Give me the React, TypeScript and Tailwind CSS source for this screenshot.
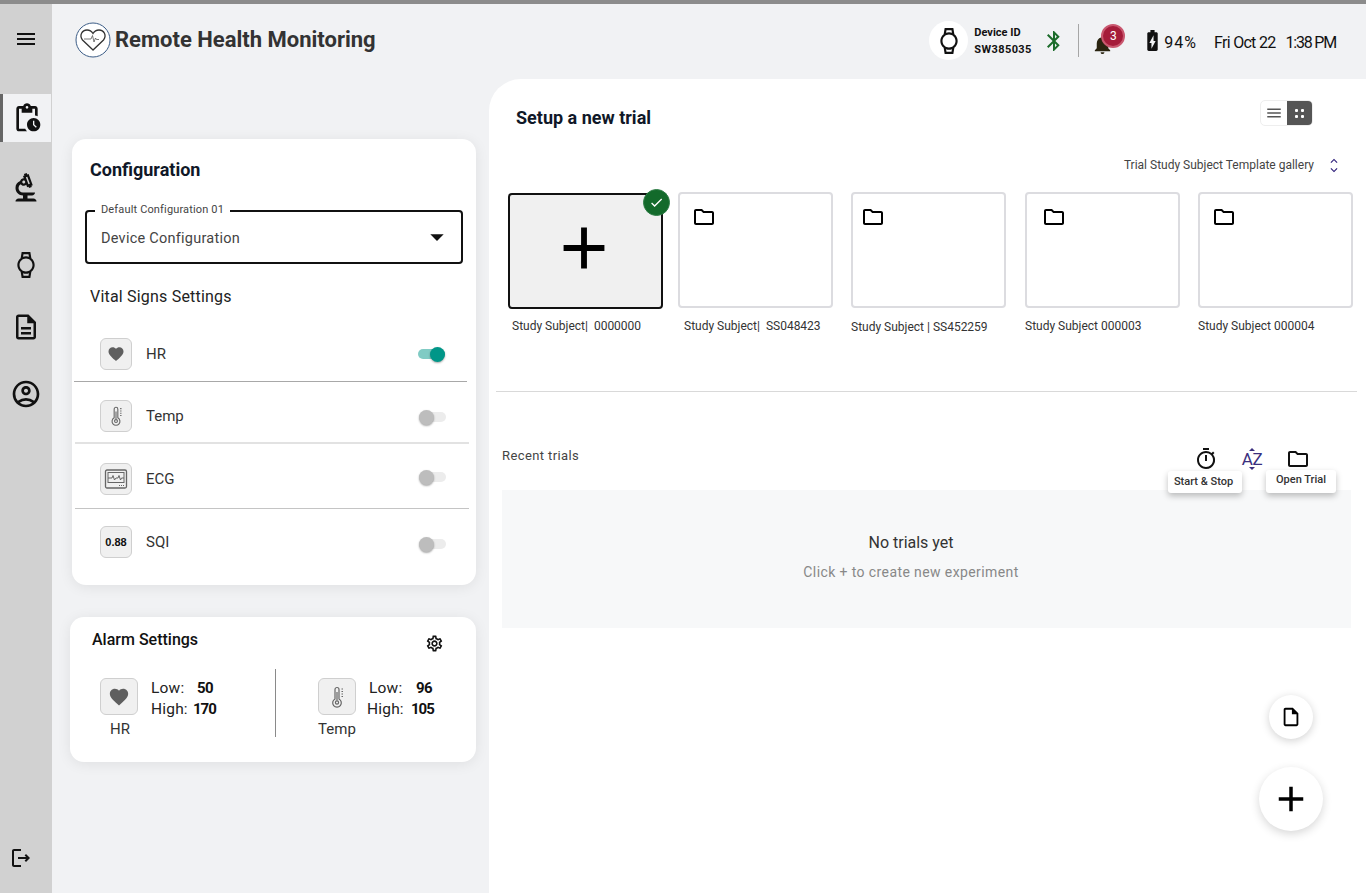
import React from 'react';
import {
  MdMenu, MdOutlinePendingActions, MdOutlineBiotech, MdOutlineWatch, MdOutlineDescription,
  MdOutlineAccountCircle, MdOutlineLogout, MdBluetooth, MdNotifications, MdBatteryChargingFull,
  MdFavorite, MdOutlineSettings, MdCheck, MdAdd, MdOutlineFolder, MdOutlineInsertDriveFile,
  MdOutlineTimer, MdArrowDropDown, MdKeyboardArrowUp, MdKeyboardArrowDown,
} from 'react-icons/md';

const Logo = () => (
  <svg width="36" height="36" viewBox="0 0 36 36" fill="none">
    <circle cx="18" cy="18" r="17" fill="#fff" stroke="#3b5c86" strokeWidth="1" />
    <path d="M18 28 L7.5 18 C4 13.5 7 8 12 8 C14.8 8 16.8 9.5 18 11.5 C19.2 9.5 21.2 8 24 8 C29 8 32 13.5 28.5 18 Z" stroke="#333" strokeWidth="1.3" />
    <path d="M9 17 H16 L17.5 13.5 L19 20 L20.5 16 L21.5 17.5 H24" stroke="#555" strokeWidth="0.8" />
  </svg>
);

const Thermo = ({ size = 22 }: { size?: number }) => (
  <svg width={size} height={size} viewBox="0 0 24 24" fill="none" stroke="#666" strokeWidth="1.2">
    <path d="M10 14V4.5a2 2 0 0 1 4 0V14a4.3 4.3 0 1 1-4 0Z" />
    <circle cx="12" cy="17.5" r="1.6" />
    <path d="M12 15.5V7M16.5 4h1.5M16.5 6.5h1.5M16.5 9h1.5M16.5 11.5h1.5" />
  </svg>
);

const EcgIcon = () => (
  <svg width="24" height="24" viewBox="0 0 24 24" fill="none" stroke="#666" strokeWidth="1">
    <rect x="1.5" y="3" width="21" height="18" rx="1.5" strokeWidth="1.3" />
    <rect x="4" y="5.5" width="16" height="10" />
    <path d="M4 11H8L9 8.5L10.5 13L12 11H14L15 8.5L16.5 13L17.5 11H20" />
    <path d="M15 18.5h5" strokeDasharray="1 1" />
  </svg>
);

const IconBox = ({ children, className }: { children: React.ReactNode; className: string }) => (
  <div className={`flex items-center justify-center shrink-0 rounded-md border border-[#cfcfcf] bg-[#f0f0f0] ${className}`}>
    {children}
  </div>
);

const Toggle = ({ on }: { on?: boolean }) => (
  <div className={`relative w-[27px] h-[10px] rounded-full ${on ? 'bg-[#80cbc4]' : 'bg-[#ececec]'}`}>
    <div
      className={`absolute top-[-2.5px] w-[15px] h-[15px] rounded-full shadow-[0_1px_2px_rgba(0,0,0,0.35)] ${on ? 'right-0 bg-[#009688]' : 'left-0 bg-[#bdbdbd]'}`}
    />
  </div>
);

const vitals = [
  { label: 'HR', icon: <MdFavorite size={18} color="#5f5f5f" />, row: 'h-[58px] pt-[3px] border-b border-[#a8a8a8] ml-[2px] mr-[9px]', box: 'ml-[26px]', toggle: 'pr-[22px]' },
  { label: 'Temp', icon: <Thermo />, row: 'h-[62px] pt-[8px] border-b-2 border-[#e2e2e2] ml-[3px] mr-[7px]', box: 'ml-[25px]', toggle: 'pr-[23px] mt-[2px]' },
  { label: 'ECG', icon: <EcgIcon />, row: 'h-[65px] pt-[6px] border-b border-[#c4c4c4] ml-[3px] mr-[7px]', box: 'ml-[25px]', toggle: 'pr-[23px] mb-[4px]' },
  { label: 'SQI', icon: <span className="text-[11px] font-bold text-[#111] font-['Liberation_Sans',sans-serif]">0.88</span>, row: 'h-[66px] ml-[3px] mr-[7px]', box: 'ml-[25px]', toggle: 'pr-[23px] mt-[4px]' },
];

const subjects = [
  { name: 'Study Subject|  SS048423', ml: 'ml-[15px]', text: 'pl-[6px] pt-[11px]', folder: 'pl-[12px]' },
  { name: 'Study Subject | SS452259', ml: 'ml-[18px]', text: 'pt-[12px]', folder: 'pl-[8px]' },
  { name: 'Study Subject 000003', ml: 'ml-[19px]', text: 'pt-[11px]', folder: 'pl-[15px]' },
  { name: 'Study Subject 000004', ml: 'ml-[18px]', text: 'pt-[11px]', folder: 'pl-[12px]' },
];

const SideItem = ({ children, className }: { children: React.ReactNode; className: string }) => (
  <div className={`flex items-center justify-center ${className}`}>{children}</div>
);

export default function App() {
  return (
    <div className="w-[1366px] h-[893px] overflow-hidden flex flex-col bg-[#f1f2f4] text-[#111] font-[Roboto,sans-serif]">
      <div className="h-[4px] bg-[#8c8c8c] shrink-0" />
      <div className="flex flex-1 min-h-0">
        <aside className="w-[52px] shrink-0 bg-[#d1d1d1] flex flex-col">
          <SideItem className="h-[70px]"><MdMenu size={24} /></SideItem>
          <div className="h-[20px]" />
          <SideItem className="h-[48px] bg-[#f1f2f4] border-l-[3px] border-[#666] mr-[1px]"><MdOutlinePendingActions size={32} /></SideItem>
          <SideItem className="h-[32px] mt-[30px]"><MdOutlineBiotech size={36} /></SideItem>
          <SideItem className="h-[32px] mt-[45px]"><MdOutlineWatch size={26} /></SideItem>
          <SideItem className="h-[32px] mt-[30px]"><MdOutlineDescription size={30} /></SideItem>
          <SideItem className="h-[32px] mt-[35px]"><MdOutlineAccountCircle size={32} /></SideItem>
          <div className="mt-auto mb-[23px] pl-[9px]"><MdOutlineLogout size={24} /></div>
        </aside>

        <div className="flex-1 flex flex-col min-w-0">
          <header className="h-[75px] shrink-0 flex items-start pl-[23px]">
            <div className="flex items-center mt-[18px]">
              <Logo />
              <span className="ml-[4px] text-[22px] leading-[30px] font-bold text-[#333]">Remote Health Monitoring</span>
            </div>
            <div className="ml-auto flex items-center mt-[17px] pr-[30px]">
              <div className="w-[39px] h-[39px] rounded-full bg-white flex items-center justify-center"><MdOutlineWatch size={26} /></div>
              <div className="ml-[6px] w-[57px] text-[11px] leading-[17px] font-bold">
                <div>Device ID</div>
                <div className="tracking-[0.4px]">SW385035</div>
              </div>
              <MdBluetooth size={24} color="#1b6b2a" className="ml-[11px]" />
              <div className="w-px h-[33px] bg-[#a6a6a6] ml-[12px]" />
              <div className="relative ml-[12px] w-[24px] h-[24px]">
                <MdNotifications size={23} color="#2a2410" className="mt-[4px]" />
                <div className="absolute left-[10px] top-[-5px] w-[24px] h-[24px] rounded-full bg-[#a51c3a] border-2 border-[#c9586f] text-white text-[12px] flex items-center justify-center">3</div>
              </div>
              <MdBatteryChargingFull size={25} className="ml-[25px]" />
              <span className="ml-[-1px] mt-[4px] text-[16px] tracking-[1px]">94%</span>
              <span className="ml-[17px] mt-[4px] text-[16px] tracking-[-0.7px]">Fri Oct 22</span>
              <span className="ml-[10px] mt-[4px] text-[16px] tracking-[-1.2px]">1:38 PM</span>
            </div>
          </header>

          <div className="flex flex-1 min-h-0">
            <div className="w-[437px] shrink-0 pl-[18px] pt-[60px] flex flex-col">
              <section className="ml-[2px] w-[404px] h-[446px] bg-white rounded-[14px] shadow-[0_2px_14px_rgba(0,0,0,0.08)] pt-[19px]">
                <h2 className="ml-[18px] text-[18px] leading-[24px] font-bold text-[#101828]">Configuration</h2>
                <div className="relative ml-[13px] mt-[28px] w-[378px] h-[54px] rounded-[4px] border-2 border-[#111] flex items-center justify-between pl-[14px] pr-[8px] pt-[3px]">
                  <span className="absolute left-[8px] top-[-8px] bg-white px-[6px] text-[11px] leading-[12px] tracking-[0.15px] text-[#444]">Default Configuration 01</span>
                  <span className="text-[14.5px] tracking-[0.25px] text-[#444]">Device Configuration</span>
                  <MdArrowDropDown size={32} color="#111" className="mt-[-3px]" />
                </div>
                <div className="ml-[18px] mt-[23px] text-[16px] leading-[20px] tracking-[0.2px] text-[#222]">Vital Signs Settings</div>
                <div className="mt-[17px]">
                  {vitals.map((v) => (
                    <div key={v.label} className={`flex items-center ${v.row}`}>
                      <IconBox className={`w-[32px] h-[32px] ${v.box}`}>{v.icon}</IconBox>
                      <span className="ml-[14px] text-[15px] text-[#333]">{v.label}</span>
                      <div className={`ml-auto ${v.toggle}`}><Toggle on={v.label === 'HR'} /></div>
                    </div>
                  ))}
                </div>
              </section>

              <section className="mt-[32px] w-[406px] h-[145px] bg-white rounded-[14px] shadow-[0_2px_14px_rgba(0,0,0,0.08)] pt-[13px]">
                <div className="flex items-start justify-between pl-[22px] pr-[32px]">
                  <h3 className="text-[16px] leading-[20px] font-medium">Alarm Settings</h3>
                  <MdOutlineSettings size={19} className="mt-[4px]" />
                </div>
                <div className="flex mt-[16px] h-[68px]">
                  <div className="w-[205px] flex pl-[30px] pt-[9px]">
                    <div className="flex flex-col items-center w-[40px]">
                      <IconBox className="w-[38px] h-[37px] mr-[2px]"><MdFavorite size={22} color="#5f5f5f" /></IconBox>
                      <span className="text-[15px] leading-[18px] mt-[5px] text-[#333]">HR</span>
                    </div>
                    <div className="ml-[11px] text-[15.5px] leading-[21px] tracking-[0.2px] text-[#222]">
                      <div className="flex"><span className="w-[46px]">Low:</span><b className="text-[15px] font-bold text-[#111] tracking-[-0.5px]">50</b></div>
                      <div className="flex"><span className="w-[42px]">High:</span><b className="text-[15px] font-bold text-[#111] tracking-[-1px]">170</b></div>
                    </div>
                  </div>
                  <div className="w-px h-[68px] bg-[#8a8a8a]" />
                  <div className="flex pl-[42px] pt-[9px]">
                    <div className="flex flex-col items-center w-[38px]">
                      <IconBox className="w-[38px] h-[37px]"><Thermo size={24} /></IconBox>
                      <span className="text-[15px] leading-[18px] mt-[5px] text-[#333]">Temp</span>
                    </div>
                    <div className="ml-[11px] text-[15.5px] leading-[21px] tracking-[0.2px] text-[#222]">
                      <div className="flex pl-[2px]"><span className="w-[47px]">Low:</span><b className="text-[15px] font-bold text-[#111] tracking-[-0.5px]">96</b></div>
                      <div className="flex"><span className="w-[44px]">High:</span><b className="text-[15px] font-bold text-[#111] tracking-[-1px]">105</b></div>
                    </div>
                  </div>
                </div>
              </section>
            </div>

            <main className="flex-1 min-w-0 bg-white rounded-tl-[32px] flex flex-col">
              <div className="flex items-start justify-between pt-[26px] pl-[27px] pr-[53px] h-[64px]">
                <h1 className="text-[18px] leading-[26px] font-bold text-[#101828]">Setup a new trial</h1>
                <div className="mt-[-5px] flex w-[53px] h-[26px] rounded-[5px] border border-[#eeeeee] overflow-hidden">
                  <div className="w-[26px] flex items-center justify-center"><MdMenu size={18} color="#555" /></div>
                  <div className="flex-1 bg-[#555] flex items-center justify-center">
                    <div className="grid grid-cols-2 gap-[3px]">
                      <i className="w-[3px] h-[3px] bg-white rounded-[1px]" />
                      <i className="w-[3px] h-[3px] bg-white rounded-[1px]" />
                      <i className="w-[3px] h-[3px] bg-white rounded-[1px]" />
                      <i className="w-[3px] h-[3px] bg-white rounded-[1px]" />
                    </div>
                  </div>
                </div>
              </div>

              <div className="flex items-center justify-end h-[24px] mt-[10px] mb-[-1px] pr-[24px]">
                <span className="text-[12px] text-[#444]">Trial Study Subject Template gallery</span>
                <div className="ml-[12px] flex flex-col w-[16px] items-center text-[#2e1f7a]">
                  <MdKeyboardArrowUp size={14} className="mb-[-5px]" />
                  <MdKeyboardArrowDown size={14} />
                </div>
              </div>

              <div className="flex pl-[19px] mt-[16px] h-[142px]">
                <div className="w-[155px] mt-[1px] shrink-0">
                  <div className="relative h-[116px] rounded-[4px] border-2 border-[#111] bg-[#f0f0f0] flex items-center justify-center">
                    <MdAdd size={70} color="#000" className="ml-[-3px] mt-[-6px]" />
                    <div className="absolute right-[-9px] top-[-6px] w-[27px] h-[27px] rounded-full bg-[#136a2b] border border-[#2e7d46] flex items-center justify-center"><MdCheck size={15} color="#fff" /></div>
                  </div>
                  <div className="pl-[4px] pt-[10px] text-[12px] leading-[14px] text-[#333] whitespace-pre">Study Subject|  0000000</div>
                </div>
                {subjects.map((s) => (
                  <div key={s.name} className={`w-[155px] shrink-0 ${s.ml}`}>
                    <div className={`h-[116px] rounded-[4px] border-2 border-[#dcdce0] pt-[11px] ${s.folder}`}><MdOutlineFolder size={24} color="#000" /></div>
                    <div className={`text-[12px] leading-[14px] text-[#333] whitespace-pre ${s.text}`}>{s.name}</div>
                  </div>
                ))}
              </div>

              <div className="h-px bg-[#d9d9d9] ml-[7px] mr-[9px] mt-[57px]" />

              <div className="relative flex items-center justify-between h-[98px] pl-[13px] pr-[15px]">
                <span className="mt-[30px] text-[13px] tracking-[0.4px] text-[#444]">Recent trials</span>
                <div className="mt-[36px] mr-[5px] flex items-center gap-[22px]">
                  <div className="relative"><MdOutlineTimer size={24} />
                    <div className="absolute top-[24px] left-[-26px] w-[74px] h-[22px] rounded-[3px] bg-white shadow-[0_3px_6px_rgba(0,0,0,0.25)] flex items-center justify-center pr-[3px] text-[11px] font-medium whitespace-nowrap text-[#333]">Start &amp; Stop</div>
                  </div>
                  <div className="relative w-[24px] h-[24px] flex items-center justify-center text-[#3a2f7e] text-[17px] leading-none tracking-[-0.5px]">
                    AZ
                    <span className="absolute left-[9px] top-[1px] border-x-[3px] border-b-[3px] border-transparent border-b-[#3a2f7e]" />
                    <span className="absolute left-[9px] bottom-[1px] border-x-[3px] border-t-[3px] border-transparent border-t-[#3a2f7e]" />
                  </div>
                  <div className="relative mr-[36px]"><MdOutlineFolder size={24} />
                    <div className="absolute top-[23px] left-[-20px] w-[70px] h-[23px] rounded-[3px] bg-white shadow-[0_3px_6px_rgba(0,0,0,0.25)] flex items-center justify-center pb-[3px] text-[11px] font-medium whitespace-nowrap text-[#333]">Open Trial</div>
                  </div>
                </div>
              </div>

              <div className="ml-[13px] mr-[15px] h-[138px] bg-[#f7f8f9] flex flex-col items-center justify-center pr-[31px]">
                <div className="text-[16px] leading-[20px] text-[#333] mt-[-4px]">No trials yet</div>
                <div className="text-[14px] leading-[18px] mt-[10px] tracking-[0.4px] text-[#888]">Click + to create new experiment</div>
              </div>

              <div className="flex flex-col items-end pr-[43px] mt-[67px]">
                <div className="mr-[10px] w-[44px] h-[44px] rounded-full bg-white shadow-[0_2px_8px_rgba(0,0,0,0.18)] flex items-center justify-center"><MdOutlineInsertDriveFile size={22} color="#000" /></div>
                <div className="mt-[28px] w-[64px] h-[64px] rounded-full bg-white shadow-[0_3px_10px_rgba(0,0,0,0.16)] flex items-center justify-center"><MdAdd size={42} color="#000" /></div>
              </div>
            </main>
          </div>
        </div>
      </div>
    </div>
  );
}
